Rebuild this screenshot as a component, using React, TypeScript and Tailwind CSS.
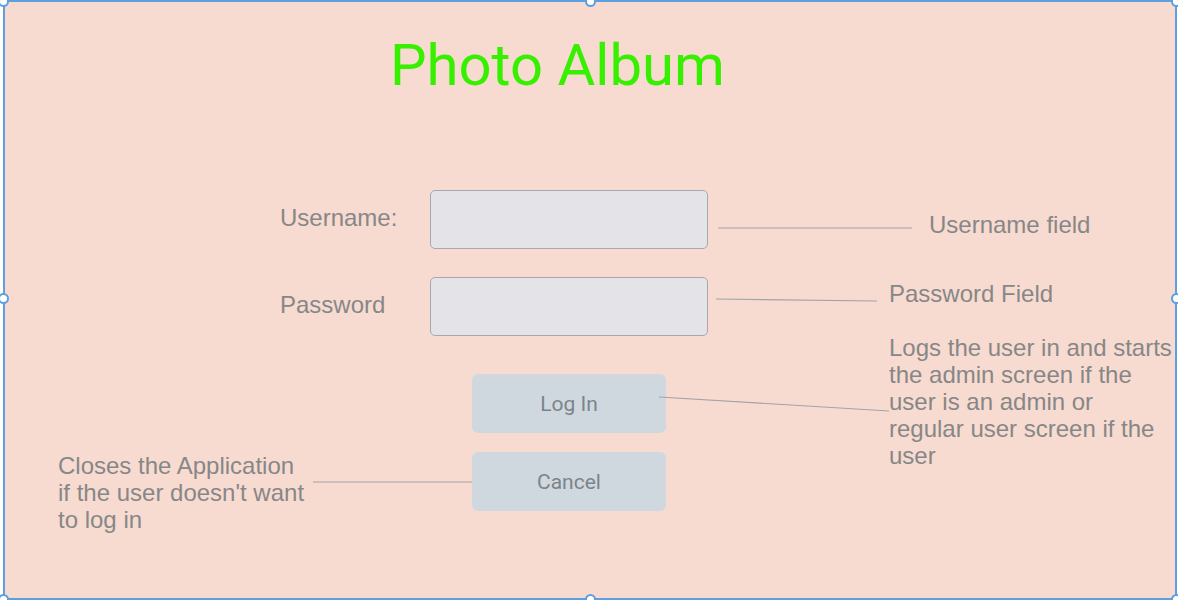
import React from "react";

const handles = [
  "left-[-7px] top-[-6px]",
  "left-[580px] top-[-6px]",
  "right-[-7px] top-[-6px]",
  "left-[-7px] top-[291px]",
  "right-[-7px] top-[291px]",
  "left-[-7px] bottom-[-7px]",
  "left-[580px] bottom-[-7px]",
  "right-[-7px] bottom-[-7px]",
];

export default function App() {
  return (
    <div className="w-[1178px] h-[600px] overflow-hidden bg-white">
      <div
        className="relative ml-[3px] w-[1174px] h-[600px] rounded-[5px] border-2 border-[#5d9fdf] bg-[#f7dbd1]"
        style={{ fontFamily: "'Liberation Sans', Arial, sans-serif" }}
      >
        {/* Title */}
        <h1
          className="ml-[385px] mt-[34px] h-[58px] text-[58px] leading-none text-[#36f000]"
          style={{ fontFamily: "Roboto, sans-serif" }}
        >
          Photo Album
        </h1>

        {/* Form */}
        <div className="mt-[96px] ml-[275px] flex flex-col gap-[28px]">
          <div className="flex items-center">
            <label className="w-[150px] pb-[4px] text-[24px] leading-[27px] text-[#878787]">
              Username:
            </label>
            <div className="w-[278px] h-[59px] rounded-[5px] border border-[#a7a7b0] bg-[#e4e3e8]" />
          </div>
          <div className="flex items-center">
            <label className="w-[150px] pb-[4px] text-[24px] leading-[27px] text-[#878787]">
              Password
            </label>
            <div className="w-[278px] h-[59px] rounded-[5px] border border-[#a7a7b0] bg-[#e4e3e8]" />
          </div>
        </div>

        <div
          className="mt-[38px] ml-[467px] flex w-[194px] flex-col gap-[19px]"
          style={{ fontFamily: "Roboto, sans-serif" }}
        >
          <button className="h-[59px] rounded-[6px] bg-[#cfd8de] pt-[2px] text-[21px] text-[#7c848b]">
            Log In
          </button>
          <button className="h-[59px] rounded-[6px] bg-[#cfd8de] pt-[2px] text-[21px] text-[#7c848b]">
            Cancel
          </button>
        </div>

        {/* Callout connectors */}
        <svg
          className="pointer-events-none absolute left-0 top-0"
          width="1170"
          height="596"
        >
          <g stroke="#a3a3a8" strokeWidth="1.2" fill="none">
            <line x1="713" y1="226" x2="907" y2="226" />
            <line x1="711" y1="297" x2="872" y2="299" />
            <line x1="654" y1="395" x2="884" y2="409" />
            <line x1="308" y1="480" x2="467" y2="480" />
          </g>
        </svg>

        {/* Callout notes */}
        <p className="absolute left-[924px] top-[209px] text-[24px] leading-[27px] text-[#878787]">
          Username field
        </p>
        <p className="absolute left-[884px] top-[278px] text-[24px] leading-[27px] text-[#878787]">
          Password Field
        </p>
        <p className="absolute left-[884px] top-[332px] whitespace-nowrap text-[24px] leading-[27px] text-[#878787]">
          Logs the user in and starts
          <br />
          the admin screen if the
          <br />
          user is an admin or
          <br />
          regular user screen if the
          <br />
          user
        </p>
        <p className="absolute left-[53px] top-[450px] whitespace-nowrap text-[24px] leading-[27px] text-[#878787]">
          Closes the Application
          <br />
          if the user doesn't want
          <br />
          to log in
        </p>

        {/* Selection handles */}
        {handles.map((pos) => (
          <span
            key={pos}
            className={`absolute ${pos} h-[11px] w-[11px] rounded-full border-2 border-[#5d9fdf] bg-white`}
          />
        ))}
      </div>
    </div>
  );
}
